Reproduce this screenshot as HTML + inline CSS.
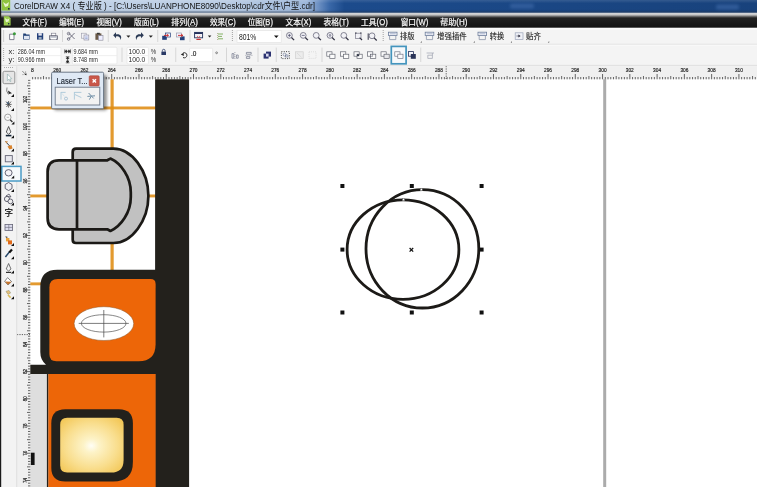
<!DOCTYPE html>
<html lang="zh"><head><meta charset="utf-8"><title>CorelDRAW X4</title>
<style>html,body{margin:0;padding:0;background:#fff;overflow:hidden}svg{display:block;filter:blur(0.35px)}text{font-family:"Liberation Sans","Noto Sans CJK SC",sans-serif;stroke-linejoin:round}</style>
</head><body>
<svg width="757" height="487" viewBox="0 0 757 487">
<defs>
<linearGradient id="tb" x1="0" y1="0" x2="1" y2="0">
<stop offset="0" stop-color="#c6d6e9"/><stop offset="0.30" stop-color="#b9cce4"/><stop offset="0.405" stop-color="#9db7da"/><stop offset="0.42" stop-color="#6f92c4"/><stop offset="0.435" stop-color="#3a68a8"/><stop offset="0.455" stop-color="#1c4b8c"/><stop offset="1" stop-color="#18427c"/>
</linearGradient>
<linearGradient id="tbv" x1="0" y1="0" x2="0" y2="1">
<stop offset="0" stop-color="#fff" stop-opacity="0.12"/><stop offset="0.25" stop-color="#fff" stop-opacity="0"/><stop offset="0.7" stop-color="#000" stop-opacity="0"/><stop offset="1" stop-color="#000" stop-opacity="0.14"/>
</linearGradient>
<linearGradient id="mb" x1="0" y1="0" x2="0" y2="1">
<stop offset="0" stop-color="#b4bcc8"/><stop offset="0.07" stop-color="#dadada"/><stop offset="0.15" stop-color="#bebebe"/><stop offset="0.25" stop-color="#686868"/><stop offset="0.35" stop-color="#222"/><stop offset="1" stop-color="#151515"/>
</linearGradient>
<radialGradient id="yel" cx="0.49" cy="0.51" r="0.68">
<stop offset="0" stop-color="#fffef6"/><stop offset="0.18" stop-color="#fdf3c8"/><stop offset="0.6" stop-color="#f9de8e"/><stop offset="1" stop-color="#f2c552"/>
</radialGradient>
<clipPath id="cv"><rect x="30" y="79" width="727" height="408"/></clipPath>
</defs>
<rect width="757" height="487" fill="#fff"/>
<g clip-path="url(#cv)">
<rect x="30" y="106.5" width="126" height="2.9" fill="#df8c12" opacity="0.88"/>
<rect x="30" y="194.5" width="126" height="2.9" fill="#df8c12" opacity="0.88"/>
<rect x="30" y="282.4" width="126" height="2.9" fill="#df8c12" opacity="0.88"/>
<rect x="110.5" y="79" width="3.2" height="200" fill="#df8c12" opacity="0.88"/>
<rect x="155.1" y="79" width="34" height="408" fill="#23211c"/>
<path d="M76 148.6 H113.5 C131.8 148.6 148.4 171 148.4 195.8 C148.4 220.6 131.8 243 113.5 243 H76 Q72.7 243 72.7 239.7 V151.9 Q72.7 148.6 76 148.6 Z" fill="#c1c1c1" stroke="#1b1916" stroke-width="2.7"/>
<path d="M59 160.3 H107.3 L110.4 158.6 C121 163.4 130.8 177 130.8 192.5 V197 C130.8 212.6 121 226.2 110.4 231 L107.3 229.3 H59 Q47.6 229.3 47.6 218 V171.6 Q47.6 160.3 59 160.3 Z" fill="#c1c1c1" stroke="#1b1916" stroke-width="2.7" stroke-linejoin="round"/>
<path d="M77 160.3 V229.3" stroke="#1b1916" stroke-width="2.7"/>
<path d="M57.3 269.7 H160 V374 H30 V364.7 H46 Q40.3 360 40.3 352 V286.7 Q40.3 269.7 57.3 269.7 Z" fill="#23211c"/>
<path d="M57.8 279 H150.6 Q155.6 279 155.6 284 V344 Q155.6 361.3 138.6 361.3 H56.4 Q49.4 361.3 49.4 354.3 V287.4 Q49.4 279 57.8 279 Z" fill="#ed6608"/>
<rect x="30" y="374" width="17.4" height="113" fill="#dedede"/>
<rect x="46.9" y="374" width="1.6" height="113" fill="#23211c"/>
<rect x="48.4" y="374" width="107.2" height="113" fill="#ed6608"/>
<rect x="30.8" y="452.7" width="3.8" height="12.3" fill="#111"/>
<ellipse cx="103.9" cy="323.6" rx="29.8" ry="16.9" fill="#fff" stroke="#8a5a30" stroke-width="0.5"/>
<ellipse cx="103.7" cy="323.4" rx="22.3" ry="8.7" fill="none" stroke="#555" stroke-width="0.7"/>
<path d="M78.7 323.4 H128.8 M103.8 310 V337.4" stroke="#444" stroke-width="0.7"/>
<path d="M65.3 409.2 H118.9 Q132.9 409.2 132.9 423.2 V462 Q132.9 481.6 113 481.6 H65.3 Q51.3 481.6 51.3 467.6 V423.2 Q51.3 409.2 65.3 409.2 Z" fill="#23211c"/>
<path d="M67.2 417.8 H116.6 Q123.6 417.8 123.6 424.8 V460 Q123.6 472.6 111 472.6 H67.2 Q60.2 472.6 60.2 465.6 V424.8 Q60.2 417.8 67.2 417.8 Z" fill="url(#yel)"/>
<rect x="603.2" y="79" width="3" height="408" fill="#ababab"/>
<ellipse cx="403" cy="249.55" rx="55.9" ry="49.75" fill="none" stroke="#1c1a17" stroke-width="2.8"/>
<ellipse cx="422.4" cy="248.85" rx="56.4" ry="59.15" fill="none" stroke="#1c1a17" stroke-width="2.8"/>
<rect x="340.4" y="184.0" width="4" height="4" fill="#111"/>
<rect x="340.4" y="247.6" width="4" height="4" fill="#111"/>
<rect x="340.4" y="310.5" width="4" height="4" fill="#111"/>
<rect x="409.8" y="184.0" width="4" height="4" fill="#111"/>
<path d="M409.6 248 l3.6 3.6 m0 -3.6 l-3.6 3.6" stroke="#111" stroke-width="1.25"/>
<rect x="409.8" y="310.5" width="4" height="4" fill="#111"/>
<rect x="479.6" y="184.0" width="4" height="4" fill="#111"/>
<rect x="479.6" y="247.6" width="4" height="4" fill="#111"/>
<rect x="479.6" y="310.5" width="4" height="4" fill="#111"/>
<rect x="402.5" y="198.4" width="2" height="2.4" fill="#fff" stroke="#555" stroke-width="0.4"/>
<rect x="420.3" y="188.4" width="2" height="2.4" fill="#fff" stroke="#555" stroke-width="0.4"/>
</g>
<rect x="17" y="66" width="740" height="13.3" fill="#f0f0f0"/>
<rect x="17" y="66" width="13.3" height="421" fill="#f0f0f0"/>
<path d="M32.62 77V79.3M35.34 77V79.3M38.07 77V79.3M40.80 77V79.3M43.53 76V79.3M46.25 77V79.3M48.98 77V79.3M51.71 77V79.3M54.43 77V79.3M57.16 74V79.3M59.89 77V79.3M62.61 77V79.3M65.34 77V79.3M68.07 77V79.3M70.80 76V79.3M73.52 77V79.3M76.25 77V79.3M78.98 77V79.3M81.70 77V79.3M84.43 74V79.3M87.16 77V79.3M89.88 77V79.3M92.61 77V79.3M95.34 77V79.3M98.06 76V79.3M100.79 77V79.3M103.52 77V79.3M106.25 77V79.3M108.97 77V79.3M111.70 74V79.3M114.43 77V79.3M117.15 77V79.3M119.88 77V79.3M122.61 77V79.3M125.34 76V79.3M128.06 77V79.3M130.79 77V79.3M133.52 77V79.3M136.24 77V79.3M138.97 74V79.3M141.70 77V79.3M144.42 77V79.3M147.15 77V79.3M149.88 77V79.3M152.61 76V79.3M155.33 77V79.3M158.06 77V79.3M160.79 77V79.3M163.51 77V79.3M166.24 74V79.3M168.97 77V79.3M171.69 77V79.3M174.42 77V79.3M177.15 77V79.3M179.88 76V79.3M182.60 77V79.3M185.33 77V79.3M188.06 77V79.3M190.78 77V79.3M193.51 74V79.3M196.24 77V79.3M198.96 77V79.3M201.69 77V79.3M204.42 77V79.3M207.14 76V79.3M209.87 77V79.3M212.60 77V79.3M215.33 77V79.3M218.05 77V79.3M220.78 74V79.3M223.51 77V79.3M226.23 77V79.3M228.96 77V79.3M231.69 77V79.3M234.42 76V79.3M237.14 77V79.3M239.87 77V79.3M242.60 77V79.3M245.32 77V79.3M248.05 74V79.3M250.78 77V79.3M253.50 77V79.3M256.23 77V79.3M258.96 77V79.3M261.69 76V79.3M264.41 77V79.3M267.14 77V79.3M269.87 77V79.3M272.59 77V79.3M275.32 74V79.3M278.05 77V79.3M280.77 77V79.3M283.50 77V79.3M286.23 77V79.3M288.95 76V79.3M291.68 77V79.3M294.41 77V79.3M297.14 77V79.3M299.86 77V79.3M302.59 74V79.3M305.32 77V79.3M308.04 77V79.3M310.77 77V79.3M313.50 77V79.3M316.23 76V79.3M318.95 77V79.3M321.68 77V79.3M324.41 77V79.3M327.13 77V79.3M329.86 74V79.3M332.59 77V79.3M335.31 77V79.3M338.04 77V79.3M340.77 77V79.3M343.50 76V79.3M346.22 77V79.3M348.95 77V79.3M351.68 77V79.3M354.40 77V79.3M357.13 74V79.3M359.86 77V79.3M362.58 77V79.3M365.31 77V79.3M368.04 77V79.3M370.76 76V79.3M373.49 77V79.3M376.22 77V79.3M378.95 77V79.3M381.67 77V79.3M384.40 74V79.3M387.13 77V79.3M389.85 77V79.3M392.58 77V79.3M395.31 77V79.3M398.03 76V79.3M400.76 77V79.3M403.49 77V79.3M406.22 77V79.3M408.94 77V79.3M411.67 74V79.3M414.40 77V79.3M417.12 77V79.3M419.85 77V79.3M422.58 77V79.3M425.31 76V79.3M428.03 77V79.3M430.76 77V79.3M433.49 77V79.3M436.21 77V79.3M438.94 74V79.3M441.67 77V79.3M444.39 77V79.3M447.12 77V79.3M449.85 77V79.3M452.57 76V79.3M455.30 77V79.3M458.03 77V79.3M460.76 77V79.3M463.48 77V79.3M466.21 74V79.3M468.94 77V79.3M471.66 77V79.3M474.39 77V79.3M477.12 77V79.3M479.84 76V79.3M482.57 77V79.3M485.30 77V79.3M488.03 77V79.3M490.75 77V79.3M493.48 74V79.3M496.21 77V79.3M498.93 77V79.3M501.66 77V79.3M504.39 77V79.3M507.12 76V79.3M509.84 77V79.3M512.57 77V79.3M515.30 77V79.3M518.02 77V79.3M520.75 74V79.3M523.48 77V79.3M526.20 77V79.3M528.93 77V79.3M531.66 77V79.3M534.38 76V79.3M537.11 77V79.3M539.84 77V79.3M542.57 77V79.3M545.29 77V79.3M548.02 74V79.3M550.75 77V79.3M553.47 77V79.3M556.20 77V79.3M558.93 77V79.3M561.65 76V79.3M564.38 77V79.3M567.11 77V79.3M569.84 77V79.3M572.56 77V79.3M575.29 74V79.3M578.02 77V79.3M580.74 77V79.3M583.47 77V79.3M586.20 77V79.3M588.92 76V79.3M591.65 77V79.3M594.38 77V79.3M597.11 77V79.3M599.83 77V79.3M602.56 74V79.3M605.29 77V79.3M608.01 77V79.3M610.74 77V79.3M613.47 77V79.3M616.20 76V79.3M618.92 77V79.3M621.65 77V79.3M624.38 77V79.3M627.10 77V79.3M629.83 74V79.3M632.56 77V79.3M635.28 77V79.3M638.01 77V79.3M640.74 77V79.3M643.47 76V79.3M646.19 77V79.3M648.92 77V79.3M651.65 77V79.3M654.37 77V79.3M657.10 74V79.3M659.83 77V79.3M662.55 77V79.3M665.28 77V79.3M668.01 77V79.3M670.74 76V79.3M673.46 77V79.3M676.19 77V79.3M678.92 77V79.3M681.64 77V79.3M684.37 74V79.3M687.10 77V79.3M689.82 77V79.3M692.55 77V79.3M695.28 77V79.3M698.00 76V79.3M700.73 77V79.3M703.46 77V79.3M706.19 77V79.3M708.91 77V79.3M711.64 74V79.3M714.37 77V79.3M717.09 77V79.3M719.82 77V79.3M722.55 77V79.3M725.28 76V79.3M728.00 77V79.3M730.73 77V79.3M733.46 77V79.3M736.18 77V79.3M738.91 74V79.3M741.64 77V79.3M744.36 77V79.3M747.09 77V79.3M749.82 77V79.3M752.55 76V79.3M755.27 77V79.3" stroke="#2a2a2a" stroke-width="0.7" fill="none"/>
<text x="31" y="72" font-size="5.7" fill="#222" stroke="#222" stroke-width="0.18" textLength="2.8" lengthAdjust="spacingAndGlyphs">8</text>
<text x="53.2" y="72" font-size="5.7" fill="#222" stroke="#222" stroke-width="0.18" textLength="8" lengthAdjust="spacingAndGlyphs">260</text>
<text x="80.4" y="72" font-size="5.7" fill="#222" stroke="#222" stroke-width="0.18" textLength="8" lengthAdjust="spacingAndGlyphs">262</text>
<text x="107.7" y="72" font-size="5.7" fill="#222" stroke="#222" stroke-width="0.18" textLength="8" lengthAdjust="spacingAndGlyphs">264</text>
<text x="135.0" y="72" font-size="5.7" fill="#222" stroke="#222" stroke-width="0.18" textLength="8" lengthAdjust="spacingAndGlyphs">266</text>
<text x="162.2" y="72" font-size="5.7" fill="#222" stroke="#222" stroke-width="0.18" textLength="8" lengthAdjust="spacingAndGlyphs">268</text>
<text x="189.5" y="72" font-size="5.7" fill="#222" stroke="#222" stroke-width="0.18" textLength="8" lengthAdjust="spacingAndGlyphs">270</text>
<text x="216.8" y="72" font-size="5.7" fill="#222" stroke="#222" stroke-width="0.18" textLength="8" lengthAdjust="spacingAndGlyphs">272</text>
<text x="244.1" y="72" font-size="5.7" fill="#222" stroke="#222" stroke-width="0.18" textLength="8" lengthAdjust="spacingAndGlyphs">274</text>
<text x="271.3" y="72" font-size="5.7" fill="#222" stroke="#222" stroke-width="0.18" textLength="8" lengthAdjust="spacingAndGlyphs">276</text>
<text x="298.6" y="72" font-size="5.7" fill="#222" stroke="#222" stroke-width="0.18" textLength="8" lengthAdjust="spacingAndGlyphs">278</text>
<text x="325.9" y="72" font-size="5.7" fill="#222" stroke="#222" stroke-width="0.18" textLength="8" lengthAdjust="spacingAndGlyphs">280</text>
<text x="353.1" y="72" font-size="5.7" fill="#222" stroke="#222" stroke-width="0.18" textLength="8" lengthAdjust="spacingAndGlyphs">282</text>
<text x="380.4" y="72" font-size="5.7" fill="#222" stroke="#222" stroke-width="0.18" textLength="8" lengthAdjust="spacingAndGlyphs">284</text>
<text x="407.7" y="72" font-size="5.7" fill="#222" stroke="#222" stroke-width="0.18" textLength="8" lengthAdjust="spacingAndGlyphs">286</text>
<text x="434.9" y="72" font-size="5.7" fill="#222" stroke="#222" stroke-width="0.18" textLength="8" lengthAdjust="spacingAndGlyphs">288</text>
<text x="462.2" y="72" font-size="5.7" fill="#222" stroke="#222" stroke-width="0.18" textLength="8" lengthAdjust="spacingAndGlyphs">290</text>
<text x="489.5" y="72" font-size="5.7" fill="#222" stroke="#222" stroke-width="0.18" textLength="8" lengthAdjust="spacingAndGlyphs">292</text>
<text x="516.8" y="72" font-size="5.7" fill="#222" stroke="#222" stroke-width="0.18" textLength="8" lengthAdjust="spacingAndGlyphs">294</text>
<text x="544.0" y="72" font-size="5.7" fill="#222" stroke="#222" stroke-width="0.18" textLength="8" lengthAdjust="spacingAndGlyphs">296</text>
<text x="571.3" y="72" font-size="5.7" fill="#222" stroke="#222" stroke-width="0.18" textLength="8" lengthAdjust="spacingAndGlyphs">298</text>
<text x="598.6" y="72" font-size="5.7" fill="#222" stroke="#222" stroke-width="0.18" textLength="8" lengthAdjust="spacingAndGlyphs">300</text>
<text x="625.8" y="72" font-size="5.7" fill="#222" stroke="#222" stroke-width="0.18" textLength="8" lengthAdjust="spacingAndGlyphs">302</text>
<text x="653.1" y="72" font-size="5.7" fill="#222" stroke="#222" stroke-width="0.18" textLength="8" lengthAdjust="spacingAndGlyphs">304</text>
<text x="680.4" y="72" font-size="5.7" fill="#222" stroke="#222" stroke-width="0.18" textLength="8" lengthAdjust="spacingAndGlyphs">306</text>
<text x="707.6" y="72" font-size="5.7" fill="#222" stroke="#222" stroke-width="0.18" textLength="8" lengthAdjust="spacingAndGlyphs">308</text>
<text x="734.9" y="72" font-size="5.7" fill="#222" stroke="#222" stroke-width="0.18" textLength="8" lengthAdjust="spacingAndGlyphs">310</text>
<path d="M28 80.35H30.3M28 83.07H30.3M27 85.79H30.3M28 88.51H30.3M28 91.23H30.3M28 93.96H30.3M28 96.68H30.3M25.2 99.40H30.3M28 102.12H30.3M28 104.84H30.3M28 107.57H30.3M28 110.29H30.3M27 113.01H30.3M28 115.73H30.3M28 118.45H30.3M28 121.18H30.3M28 123.90H30.3M25.2 126.62H30.3M28 129.34H30.3M28 132.06H30.3M28 134.79H30.3M28 137.51H30.3M27 140.23H30.3M28 142.95H30.3M28 145.67H30.3M28 148.40H30.3M28 151.12H30.3M25.2 153.84H30.3M28 156.56H30.3M28 159.28H30.3M28 162.01H30.3M28 164.73H30.3M27 167.45H30.3M28 170.17H30.3M28 172.89H30.3M28 175.62H30.3M28 178.34H30.3M25.2 181.06H30.3M28 183.78H30.3M28 186.50H30.3M28 189.23H30.3M28 191.95H30.3M27 194.67H30.3M28 197.39H30.3M28 200.11H30.3M28 202.84H30.3M28 205.56H30.3M25.2 208.28H30.3M28 211.00H30.3M28 213.72H30.3M28 216.45H30.3M28 219.17H30.3M27 221.89H30.3M28 224.61H30.3M28 227.33H30.3M28 230.06H30.3M28 232.78H30.3M25.2 235.50H30.3M28 238.22H30.3M28 240.94H30.3M28 243.67H30.3M28 246.39H30.3M27 249.11H30.3M28 251.83H30.3M28 254.55H30.3M28 257.28H30.3M28 260.00H30.3M25.2 262.72H30.3M28 265.44H30.3M28 268.16H30.3M28 270.89H30.3M28 273.61H30.3M27 276.33H30.3M28 279.05H30.3M28 281.77H30.3M28 284.50H30.3M28 287.22H30.3M25.2 289.94H30.3M28 292.66H30.3M28 295.38H30.3M28 298.11H30.3M28 300.83H30.3M27 303.55H30.3M28 306.27H30.3M28 308.99H30.3M28 311.72H30.3M28 314.44H30.3M25.2 317.16H30.3M28 319.88H30.3M28 322.60H30.3M28 325.33H30.3M28 328.05H30.3M27 330.77H30.3M28 333.49H30.3M28 336.21H30.3M28 338.94H30.3M28 341.66H30.3M25.2 344.38H30.3M28 347.10H30.3M28 349.82H30.3M28 352.55H30.3M28 355.27H30.3M27 357.99H30.3M28 360.71H30.3M28 363.43H30.3M28 366.16H30.3M28 368.88H30.3M25.2 371.60H30.3M28 374.32H30.3M28 377.04H30.3M28 379.77H30.3M28 382.49H30.3M27 385.21H30.3M28 387.93H30.3M28 390.65H30.3M28 393.38H30.3M28 396.10H30.3M25.2 398.82H30.3M28 401.54H30.3M28 404.26H30.3M28 406.99H30.3M28 409.71H30.3M27 412.43H30.3M28 415.15H30.3M28 417.87H30.3M28 420.60H30.3M28 423.32H30.3M25.2 426.04H30.3M28 428.76H30.3M28 431.48H30.3M28 434.21H30.3M28 436.93H30.3M27 439.65H30.3M28 442.37H30.3M28 445.09H30.3M28 447.82H30.3M28 450.54H30.3M25.2 453.26H30.3M28 455.98H30.3M28 458.70H30.3M28 461.43H30.3M28 464.15H30.3M27 466.87H30.3M28 469.59H30.3M28 472.31H30.3M28 475.04H30.3M28 477.76H30.3M25.2 480.48H30.3M28 483.20H30.3M28 485.92H30.3" stroke="#2a2a2a" stroke-width="0.7" fill="none"/>
<text transform="translate(26.8 103.1) rotate(-90)" font-size="5.4" fill="#222" stroke="#222" stroke-width="0.18" textLength="7.4" lengthAdjust="spacingAndGlyphs">102</text>
<text transform="translate(26.8 130.3) rotate(-90)" font-size="5.4" fill="#222" stroke="#222" stroke-width="0.18" textLength="7.4" lengthAdjust="spacingAndGlyphs">100</text>
<text transform="translate(26.8 156.3) rotate(-90)" font-size="5.4" fill="#222" stroke="#222" stroke-width="0.18" textLength="5.0" lengthAdjust="spacingAndGlyphs">98</text>
<text transform="translate(26.8 183.6) rotate(-90)" font-size="5.4" fill="#222" stroke="#222" stroke-width="0.18" textLength="5.0" lengthAdjust="spacingAndGlyphs">96</text>
<text transform="translate(26.8 210.8) rotate(-90)" font-size="5.4" fill="#222" stroke="#222" stroke-width="0.18" textLength="5.0" lengthAdjust="spacingAndGlyphs">94</text>
<text transform="translate(26.8 238.0) rotate(-90)" font-size="5.4" fill="#222" stroke="#222" stroke-width="0.18" textLength="5.0" lengthAdjust="spacingAndGlyphs">92</text>
<text transform="translate(26.8 265.2) rotate(-90)" font-size="5.4" fill="#222" stroke="#222" stroke-width="0.18" textLength="5.0" lengthAdjust="spacingAndGlyphs">90</text>
<text transform="translate(26.8 292.4) rotate(-90)" font-size="5.4" fill="#222" stroke="#222" stroke-width="0.18" textLength="5.0" lengthAdjust="spacingAndGlyphs">88</text>
<text transform="translate(26.8 319.7) rotate(-90)" font-size="5.4" fill="#222" stroke="#222" stroke-width="0.18" textLength="5.0" lengthAdjust="spacingAndGlyphs">86</text>
<text transform="translate(26.8 346.9) rotate(-90)" font-size="5.4" fill="#222" stroke="#222" stroke-width="0.18" textLength="5.0" lengthAdjust="spacingAndGlyphs">84</text>
<text transform="translate(26.8 374.1) rotate(-90)" font-size="5.4" fill="#222" stroke="#222" stroke-width="0.18" textLength="5.0" lengthAdjust="spacingAndGlyphs">82</text>
<text transform="translate(26.8 401.3) rotate(-90)" font-size="5.4" fill="#222" stroke="#222" stroke-width="0.18" textLength="5.0" lengthAdjust="spacingAndGlyphs">80</text>
<text transform="translate(26.8 428.5) rotate(-90)" font-size="5.4" fill="#222" stroke="#222" stroke-width="0.18" textLength="5.0" lengthAdjust="spacingAndGlyphs">78</text>
<text transform="translate(26.8 455.8) rotate(-90)" font-size="5.4" fill="#222" stroke="#222" stroke-width="0.18" textLength="5.0" lengthAdjust="spacingAndGlyphs">76</text>
<text transform="translate(26.8 483.0) rotate(-90)" font-size="5.4" fill="#222" stroke="#222" stroke-width="0.18" textLength="5.0" lengthAdjust="spacingAndGlyphs">74</text>
<rect x="17" y="66" width="13.3" height="13.3" fill="#f0f0f0"/>
<path d="M22.3 71 L25.4 74.2" stroke="#444" stroke-width="0.9" stroke-dasharray="0.9 0.8"/><path d="M26.6 75.2 l-2.2 -0.4 l1.8 -1.8z" fill="#222"/><path d="M25.6 71.4v1.4M22.4 74.6h1.2" stroke="#666" stroke-width="0.6"/>
<path d="M446.2 66V79" stroke="#333" stroke-width="0.8" stroke-dasharray="1.2 1.2"/>
<path d="M17 334.6H30" stroke="#333" stroke-width="0.8" stroke-dasharray="1.2 1.2"/>
<rect x="0" y="66" width="17" height="421" fill="#f3f3f3"/>
<rect x="16.4" y="66" width="0.8" height="421" fill="#d9d9d9"/>
<path d="M4 67.5H14" stroke="#aaa" stroke-width="1" stroke-dasharray="1 1"/>
<rect x="3" y="71.3" width="11.8" height="12.4" rx="1.5" fill="#e6e6e6" stroke="#8a8a8a" stroke-width="0.9"/>
<path d="M7.4 74 L7.4 80.6 L9 79.2 L10.2 81.6 L11 81.2 L9.9 78.9 L11.8 78.7 Z" fill="#fff" stroke="#8aa" stroke-width="0.6"/>
<path d="M7 87.5 Q5.6 91 8.5 94.5" stroke="#777" stroke-width="0.9" fill="none"/><path d="M8 90.6 l4 2.6 l-3.2 0.8 z" fill="#222"/>
<path d="M11.0 97.0 l3 0 l0 -3 z" fill="#111"/>
<path d="M6 101.5 L11 107 M5.6 104.4 H11.6 M8.6 101 V107.6 M11 101.6 L6.4 107" stroke="#444" stroke-width="0.8" fill="none"/><path d="M6.4 102 l2.6 0.8 l-1 1.8z" fill="#357"/>
<path d="M11.0 111.0 l3 0 l0 -3 z" fill="#111"/>
<circle cx="7.8" cy="117.3" r="3.2" fill="#fafafa" stroke="#8a8a8a" stroke-width="0.8"/><path d="M6.6 117.3h2.4" stroke="#999" stroke-width="0.6"/><path d="M10.2 119.8 L12.4 122" stroke="#333" stroke-width="1.3"/>
<path d="M11.4 124.6 l3 0 l0 -3 z" fill="#111"/>
<path d="M8.6 126.5 L6.3 132 L8.6 134.4 L10.9 132 Z" fill="#eee" stroke="#333" stroke-width="0.8"/><path d="M5.8 135.6H11.4" stroke="#123" stroke-width="1.6"/>
<path d="M11.0 138.2 l3 0 l0 -3 z" fill="#111"/>
<path d="M5.5 141.5 L11.5 148" stroke="#444" stroke-width="1"/><path d="M5 141 l3 0.4 l-1.6 2.2z" fill="#c84"/><path d="M7.5 146.5 l4 -1.5 l1 3.4 l-3 1z" fill="#d9822b"/>
<path d="M11.0 151.4 l3 0 l0 -3 z" fill="#111"/>
<rect x="5.3" y="155.6" width="7" height="6.2" fill="#e8e8ee" stroke="#667" stroke-width="0.9"/>
<path d="M11.0 164.4 l3 0 l0 -3 z" fill="#111"/>
<rect x="1.8" y="166.4" width="19.2" height="14.6" fill="#f6fafc" stroke="#4a9bc6" stroke-width="1.5"/>
<ellipse cx="8.6" cy="172.8" rx="3.5" ry="3.2" fill="#f4f4f8" stroke="#556" stroke-width="0.9"/>
<path d="M11.2 178.4 l3 0 l0 -3 z" fill="#111"/>
<path d="M8.6 182.5 L12 184.5 L12 188.5 L8.6 190.5 L5.2 188.5 L5.2 184.5Z" fill="#f0f0f4" stroke="#556" stroke-width="0.9"/>
<path d="M11.0 192.0 l3 0 l0 -3 z" fill="#111"/>
<circle cx="7" cy="199" r="2.6" fill="#eee" stroke="#445" stroke-width="0.8"/><circle cx="10.4" cy="201.4" r="2.4" fill="#eee" stroke="#445" stroke-width="0.8"/><path d="M6 196 l3 -2 l2 3z" fill="#eee" stroke="#445" stroke-width="0.7"/>
<path d="M11.0 205.4 l3 0 l0 -3 z" fill="#111"/>
<text x="4.6" y="215.6" font-size="8.6" fill="#333" font-weight="bold">字</text>
<rect x="5" y="224.4" width="7.6" height="6" fill="#dde" stroke="#667" stroke-width="0.8"/><path d="M5 227.4H12.6M8.8 224.4V230.4" stroke="#667" stroke-width="0.6"/>
<path d="M5 236.6 l2.4 0 l0 2.4z" fill="#555"/><rect x="6" y="238" width="3.4" height="3.4" fill="#e9a23b"/><rect x="8" y="240.4" width="4" height="4" fill="#e06a1a"/>
<path d="M11.0 246.0 l3 0 l0 -3 z" fill="#111"/>
<path d="M5.4 257 L9.6 251.6" stroke="#246" stroke-width="1.5"/><path d="M9.3 252.4 L12 249.4" stroke="#111" stroke-width="2.2"/>
<path d="M11.0 259.2 l3 0 l0 -3 z" fill="#111"/>
<path d="M8.6 263.5 L6.2 269 L8.6 271 L11 269 Z" fill="#f2f2f2" stroke="#555" stroke-width="0.8"/><path d="M6 272.4H11.2" stroke="#333" stroke-width="1.2"/>
<path d="M11.0 273.4 l3 0 l0 -3 z" fill="#111"/>
<path d="M7.6 277.6 L11.6 281.6 L8 285 L4.6 281.4 Z" fill="#fff" stroke="#555" stroke-width="0.7"/><path d="M5 281.6 L8 284.8 L11.4 281.8 Z" fill="#c7742a"/>
<path d="M11.0 286.4 l3 0 l0 -3 z" fill="#111"/>
<path d="M6 291.4 l3 -1 l1.6 2.6 l-2.6 1.4z" fill="#e8c27a" stroke="#886" stroke-width="0.5"/><path d="M8 295 l2.6 2.6" stroke="#db5" stroke-width="1.6"/>
<path d="M11.0 299.2 l3 0 l0 -3 z" fill="#111"/>
<rect x="0" y="27.6" width="757" height="38.6" fill="#f4f4f4"/>
<rect x="0" y="27.6" width="757" height="2" fill="#fdfdfd"/>
<rect x="0" y="43.8" width="757" height="0.9" fill="#dcdcdc"/>
<rect x="0" y="44.7" width="757" height="0.8" fill="#fbfbfb"/>
<rect x="0" y="64.9" width="757" height="0.8" fill="#dadada"/>
<path d="M3.6 48V62" stroke="#aaa" stroke-width="1" stroke-dasharray="1 1"/>
<rect x="0" y="0" width="757" height="13" fill="url(#tb)"/>
<rect x="0" y="0" width="757" height="13" fill="url(#tbv)"/>
<rect x="0" y="11.6" width="757" height="1.1" fill="#2c4262" opacity="0.7"/>
<rect x="0" y="12.7" width="757" height="15" fill="url(#mb)"/>
<rect x="0" y="0" width="1.2" height="487" fill="#1a1a1a"/>
<rect x="510" y="3.4" width="24" height="5" fill="#456fae" opacity="0.55" rx="2" style="filter:blur(1.6px)"/>
<rect x="716" y="4.4" width="23" height="5" fill="#456fae" opacity="0.55" rx="2" style="filter:blur(1.6px)"/>
<rect x="1.6" y="0" width="8.6" height="10.6" fill="#8fc33f"/><path d="M3 2 l3 2 l3 -2 l-1 4 l-3 1z" fill="#e9f5cf"/><rect x="8" y="8" width="1.6" height="1.6" fill="#234"/>
<path d="M3.8 16.2 H8.6 L10.6 18.2 V25.6 H3.8Z" fill="#9acb4d"/><path d="M4.8 18 l2.4 1.6 l2 -1 l-0.6 3 l-2.6 0.6z" fill="#e9f5cf"/><rect x="8" y="23" width="1.4" height="1.4" fill="#234"/>
<text x="14" y="9.3" font-size="9.2" fill="#111" textLength="301" lengthAdjust="spacingAndGlyphs">CorelDRAW X4 ( 专业版 ) - [C:\Users\LUANPHONE8090\Desktop\cdr文件\户型.cdr]</text>
<text x="22.5" y="24.6" font-size="8.4" fill="#f8f8f8" stroke="#f8f8f8" stroke-width="0.22" textLength="24.4" lengthAdjust="spacingAndGlyphs">文件(F)</text>
<rect x="39.3" y="25.6" width="4" height="0.6" fill="#ddd"/>
<text x="59.2" y="24.6" font-size="8.4" fill="#f8f8f8" stroke="#f8f8f8" stroke-width="0.22" textLength="24.7" lengthAdjust="spacingAndGlyphs">编辑(E)</text>
<rect x="76.3" y="25.6" width="4" height="0.6" fill="#ddd"/>
<text x="96.4" y="24.6" font-size="8.4" fill="#f8f8f8" stroke="#f8f8f8" stroke-width="0.22" textLength="25.4" lengthAdjust="spacingAndGlyphs">视图(V)</text>
<rect x="114.2" y="25.6" width="4" height="0.6" fill="#ddd"/>
<text x="134.0" y="24.6" font-size="8.4" fill="#f8f8f8" stroke="#f8f8f8" stroke-width="0.22" textLength="24.8" lengthAdjust="spacingAndGlyphs">版面(L)</text>
<rect x="151.2" y="25.6" width="4" height="0.6" fill="#ddd"/>
<text x="171.3" y="24.6" font-size="8.4" fill="#f8f8f8" stroke="#f8f8f8" stroke-width="0.22" textLength="26.7" lengthAdjust="spacingAndGlyphs">排列(A)</text>
<rect x="190.4" y="25.6" width="4" height="0.6" fill="#ddd"/>
<text x="209.9" y="24.6" font-size="8.4" fill="#f8f8f8" stroke="#f8f8f8" stroke-width="0.22" textLength="25.8" lengthAdjust="spacingAndGlyphs">效果(C)</text>
<rect x="228.1" y="25.6" width="4" height="0.6" fill="#ddd"/>
<text x="247.8" y="24.6" font-size="8.4" fill="#f8f8f8" stroke="#f8f8f8" stroke-width="0.22" textLength="25.1" lengthAdjust="spacingAndGlyphs">位图(B)</text>
<rect x="265.3" y="25.6" width="4" height="0.6" fill="#ddd"/>
<text x="285.6" y="24.6" font-size="8.4" fill="#f8f8f8" stroke="#f8f8f8" stroke-width="0.22" textLength="25.6" lengthAdjust="spacingAndGlyphs">文本(X)</text>
<rect x="303.6" y="25.6" width="4" height="0.6" fill="#ddd"/>
<text x="323.5" y="24.6" font-size="8.4" fill="#f8f8f8" stroke="#f8f8f8" stroke-width="0.22" textLength="25.4" lengthAdjust="spacingAndGlyphs">表格(T)</text>
<rect x="341.3" y="25.6" width="4" height="0.6" fill="#ddd"/>
<text x="361.0" y="24.6" font-size="8.4" fill="#f8f8f8" stroke="#f8f8f8" stroke-width="0.22" textLength="26.8" lengthAdjust="spacingAndGlyphs">工具(O)</text>
<rect x="380.2" y="25.6" width="4" height="0.6" fill="#ddd"/>
<text x="400.7" y="24.6" font-size="8.4" fill="#f8f8f8" stroke="#f8f8f8" stroke-width="0.22" textLength="27.7" lengthAdjust="spacingAndGlyphs">窗口(W)</text>
<rect x="420.8" y="25.6" width="4" height="0.6" fill="#ddd"/>
<text x="440.3" y="24.6" font-size="8.4" fill="#f8f8f8" stroke="#f8f8f8" stroke-width="0.22" textLength="27.1" lengthAdjust="spacingAndGlyphs">帮助(H)</text>
<rect x="459.8" y="25.6" width="4" height="0.6" fill="#ddd"/>
<path d="M3.6 30.5V42" stroke="#aaa" stroke-width="1" stroke-dasharray="1 1"/>
<path d="M9.6 34.2 H14 V39.6 H9.6Z" fill="#fff" stroke="#667" stroke-width="0.8"/><circle cx="14.4" cy="33.8" r="1.5" fill="#3a9a3a"/>
<path d="M23.2 33.4 h2.4 l0.8 1 h3.2 v5 h-6.4z" fill="#1f3f73"/><rect x="24" y="35.8" width="5.2" height="3.2" fill="#dfe6f2"/>
<rect x="37" y="33.2" width="6.2" height="6.4" fill="#24407a"/><rect x="38.4" y="33.2" width="3.4" height="2.4" fill="#e8e8f0"/><rect x="38.6" y="37" width="3" height="2.6" fill="#9ab"/>
<rect x="51.4" y="33.2" width="4.4" height="2.6" fill="#fff" stroke="#778" stroke-width="0.6"/><rect x="49.6" y="35.8" width="8" height="3.6" fill="#c9cdd6" stroke="#556" stroke-width="0.7"/><rect x="51" y="38" width="5" height="1.4" fill="#fff"/>
<rect x="62.2" y="30.0" width="0.8" height="12.0" fill="#cfcfcf"/>
<path d="M68.6 33 L74.6 39 M74.6 33 L68.6 39" stroke="#667" stroke-width="0.9"/><circle cx="68.6" cy="39" r="1.3" fill="none" stroke="#667" stroke-width="0.8"/><circle cx="68.6" cy="33.6" r="1.3" fill="none" stroke="#667" stroke-width="0.8"/>
<rect x="81.6" y="33.2" width="4.6" height="5" fill="#f4f4f8" stroke="#99a" stroke-width="0.6"/><rect x="84" y="35" width="4.8" height="5" fill="#eef" stroke="#889" stroke-width="0.6"/><path d="M85.2 37h2.4M85.2 38.4h2.4" stroke="#57a" stroke-width="0.5"/>
<rect x="95.4" y="33.4" width="6" height="6.4" fill="#6b5a48"/><rect x="97" y="32.8" width="2.8" height="1.4" fill="#333"/><rect x="98.4" y="35.6" width="4.6" height="4.6" fill="#eef" stroke="#889" stroke-width="0.6"/>
<rect x="107.8" y="30.0" width="0.8" height="12.0" fill="#cfcfcf"/>
<path d="M120.4 40 C122.6 36 120 33.6 116 34.4 V32.2 L113.2 35.2 L116 38.2 V36.4 C118.6 35.8 120.4 37 120.4 40Z" fill="#2b3a55"/>
<path d="M126.4 35.6h4l-2 2.2z" fill="#222"/>
<path d="M136.6 40 C134.4 36 137 33.6 141 34.4 V32.2 L143.8 35.2 L141 38.2 V36.4 C138.4 35.8 136.6 37 136.6 40Z" fill="#2b3a55"/>
<path d="M148.8 35.6h4l-2 2.2z" fill="#222"/>
<rect x="157.4" y="30.0" width="0.8" height="12.0" fill="#cfcfcf"/>
<rect x="162.2" y="35.8" width="4.6" height="4" fill="#24407a"/><rect x="165.4" y="33" width="5" height="4" fill="#f4f4ff" stroke="#24407a" stroke-width="0.7"/><path d="M164 35.4h4.4M168.4 35.4l-1.6-1.2M168.4 35.4l-1.6 1.2" stroke="#c22" stroke-width="0.9" fill="none"/>
<rect x="180" y="36.4" width="4.6" height="3.8" fill="#24407a"/><rect x="176.4" y="33" width="5" height="4" fill="#f4f4ff" stroke="#99a" stroke-width="0.7"/><path d="M178 35.4h4.8M182.8 35.4l-1.6-1.2M182.8 35.4l-1.6 1.2" stroke="#c22" stroke-width="0.9" fill="none"/>
<rect x="189.6" y="30.0" width="0.8" height="12.0" fill="#cfcfcf"/>
<rect x="194.6" y="32.4" width="8" height="5.4" fill="#f4f4f8" stroke="#24305a" stroke-width="0.9"/><rect x="194.6" y="32.4" width="8" height="1.6" fill="#24305a"/><path d="M196.4 39.4h4.4" stroke="#c33" stroke-width="1.2"/><path d="M197 36 l1.6 1.4 l1.6-1.4" stroke="#d44" stroke-width="0.8" fill="none"/>
<path d="M207.8 35.6h3.6l-1.8 2z" fill="#222"/>
<path d="M218 34h5M218 36.4h4M218 38.8h5" stroke="#7a5" stroke-width="0.9"/><path d="M217.6 33v7" stroke="#996" stroke-width="0.7" stroke-dasharray="1 1"/>
<path d="M232.4 30.0V42.0" stroke="#999" stroke-width="0.9" stroke-dasharray="1 1"/>
<rect x="237" y="30.6" width="44.2" height="11.8" fill="#fff" stroke="#e2e2e2" stroke-width="0.6"/>
<text x="239" y="39.6" font-size="8.6" fill="#222" textLength="17.4" lengthAdjust="spacingAndGlyphs">801%</text>
<path d="M274 35.6h4.6l-2.3 2.5z" fill="#111"/>
<circle cx="289.4" cy="35.4" r="2.9" fill="#f2f2f6" stroke="#778" stroke-width="0.9"/><path d="M291.5 37.5 l2.6 2.6" stroke="#334" stroke-width="1.3"/>
<path d="M287.9 35.4h3M289.4 33.9v3" stroke="#446" stroke-width="0.7"/>
<circle cx="303.2" cy="35.4" r="2.9" fill="#f2f2f6" stroke="#778" stroke-width="0.9"/><path d="M305.3 37.5 l2.6 2.6" stroke="#334" stroke-width="1.3"/>
<path d="M301.7 35.4h3" stroke="#446" stroke-width="0.7"/>
<circle cx="316.2" cy="35.4" r="2.9" fill="#f2f2f6" stroke="#778" stroke-width="0.9"/><path d="M318.3 37.5 l2.6 2.6" stroke="#334" stroke-width="1.3"/>
<circle cx="330.0" cy="35.4" r="2.9" fill="#f2f2f6" stroke="#778" stroke-width="0.9"/><path d="M332.1 37.5 l2.6 2.6" stroke="#334" stroke-width="1.3"/>
<circle cx="330.0" cy="35.4" r="1.3" fill="#99a"/>
<circle cx="343.8" cy="35.4" r="2.9" fill="#f2f2f6" stroke="#778" stroke-width="0.9"/><path d="M345.9 37.5 l2.6 2.6" stroke="#334" stroke-width="1.3"/>
<rect x="355.6" y="33.2" width="5.4" height="5.4" fill="#f2f2f6" stroke="#778" stroke-width="0.7"/><path d="M359.6 37.6l2.4 2.4" stroke="#334" stroke-width="1.2"/><path d="M355 33h1.6M360 33h1.6" stroke="#334" stroke-width="0.9"/>
<path d="M368.2 33.4v6.4" stroke="#334" stroke-width="1"/>
<circle cx="372.0" cy="35.8" r="2.9" fill="#f2f2f6" stroke="#778" stroke-width="0.9"/><path d="M374.1 37.9 l2.6 2.6" stroke="#334" stroke-width="1.3"/>
<path d="M383.2 30.0V42.0" stroke="#999" stroke-width="0.9" stroke-dasharray="1 1"/>
<rect x="388.4" y="32.2" width="8.6" height="3.2" fill="#f8f8fb" stroke="#6a7a9a" stroke-width="0.8"/><path d="M389.8 33.8h6" stroke="#93a2c2" stroke-width="0.8"/><path d="M389.6 35.6v4h6.2v-4" stroke="#8a94a8" stroke-width="0.8" fill="none"/>
<text x="400" y="39.4" font-size="8.2" fill="#1c1c1c" stroke="#1c1c1c" stroke-width="0.12" textLength="14.6" lengthAdjust="spacingAndGlyphs">排版</text>
<path d="M420.4 42.6l1.4 0l0-1.4z" fill="#333"/>
<rect x="425.2" y="32.2" width="8.6" height="3.2" fill="#f8f8fb" stroke="#6a7a9a" stroke-width="0.8"/><path d="M426.6 33.8h6" stroke="#93a2c2" stroke-width="0.8"/><path d="M426.4 35.6v4h6.2v-4" stroke="#8a94a8" stroke-width="0.8" fill="none"/>
<text x="437" y="39.4" font-size="8.2" fill="#1c1c1c" stroke="#1c1c1c" stroke-width="0.12" textLength="29.8" lengthAdjust="spacingAndGlyphs">增强插件</text>
<path d="M473.4 42.6l1.4 0l0-1.4z" fill="#333"/>
<rect x="478.0" y="32.2" width="8.6" height="3.2" fill="#f8f8fb" stroke="#6a7a9a" stroke-width="0.8"/><path d="M479.4 33.8h6" stroke="#93a2c2" stroke-width="0.8"/><path d="M479.2 35.6v4h6.2v-4" stroke="#8a94a8" stroke-width="0.8" fill="none"/>
<text x="489.8" y="39.4" font-size="8.2" fill="#1c1c1c" stroke="#1c1c1c" stroke-width="0.12" textLength="14.4" lengthAdjust="spacingAndGlyphs">转换</text>
<path d="M510.6 42.6l1.4 0l0-1.4z" fill="#333"/>
<rect x="515.2" y="32.8" width="7.8" height="6.6" fill="#eef0f6" stroke="#9aa3b8" stroke-width="0.7"/><path d="M516.4 36h2.2" stroke="#556" stroke-width="0.7"/><path d="M518.4 34.6l2.2 1.4l-2.2 1.4z" fill="#223"/>
<text x="526" y="39.4" font-size="8.2" fill="#1c1c1c" stroke="#1c1c1c" stroke-width="0.12" textLength="15" lengthAdjust="spacingAndGlyphs">贴齐</text>
<path d="M547.8 42.6l1.4 0l0-1.4z" fill="#333"/>
<rect x="16.6" y="47.3" width="44.4" height="16.7" rx="1" fill="#fff" stroke="#e4e4e4" stroke-width="0.7"/>
<rect x="72.4" y="47.3" width="44.6" height="16.7" rx="1" fill="#fff" stroke="#e4e4e4" stroke-width="0.7"/>
<rect x="127.0" y="47.3" width="21.4" height="16.7" rx="1" fill="#fff" stroke="#e4e4e4" stroke-width="0.7"/>
<rect x="189.6" y="48.2" width="23.0" height="13.4" rx="1" fill="#fff" stroke="#e4e4e4" stroke-width="0.7"/>
<rect x="16.6" y="55.3" width="44.4" height="0.8" fill="#ececec"/><rect x="72.4" y="55.3" width="44.6" height="0.8" fill="#ececec"/><rect x="127" y="55.3" width="21.4" height="0.8" fill="#ececec"/>
<text x="8.6" y="53.9" font-size="7.4" fill="#2a2a2a" textLength="6" lengthAdjust="spacingAndGlyphs">x:</text>
<text x="8.6" y="62.2" font-size="7.4" fill="#2a2a2a" textLength="6" lengthAdjust="spacingAndGlyphs">y:</text>
<text x="17.8" y="53.7" font-size="7" fill="#2a2a2a" textLength="27.2" lengthAdjust="spacingAndGlyphs">286.04 mm</text>
<text x="17.8" y="61.9" font-size="7" fill="#2a2a2a" textLength="27.2" lengthAdjust="spacingAndGlyphs">90.966 mm</text>
<path d="M64.8 51.4h5.6M64.8 49.4v4M70.4 49.4v4M65 51.4l1.6-1.4v2.8zM70.2 51.4l-1.6-1.4v2.8z" stroke="#222" stroke-width="0.7" fill="#222"/>
<path d="M67.6 57v5.6M65.8 56.8h3.6M65.8 62.8h3.6M67.6 57l-1.3 1.6h2.6zM67.6 62.6l-1.3-1.6h2.6z" stroke="#222" stroke-width="0.7" fill="#222"/>
<text x="73.4" y="53.7" font-size="7" fill="#2a2a2a" textLength="24.4" lengthAdjust="spacingAndGlyphs">9.684 mm</text>
<text x="73.4" y="61.9" font-size="7" fill="#2a2a2a" textLength="24.4" lengthAdjust="spacingAndGlyphs">8.748 mm</text>
<rect x="121.6" y="47.6" width="0.8" height="14.4" fill="#cfcfcf"/>
<text x="128.4" y="53.7" font-size="7" fill="#2a2a2a" textLength="17" lengthAdjust="spacingAndGlyphs">100.0</text>
<text x="128.4" y="61.9" font-size="7" fill="#2a2a2a" textLength="17" lengthAdjust="spacingAndGlyphs">100.0</text>
<text x="150.8" y="53.9" font-size="7.4" fill="#333" textLength="5.4" lengthAdjust="spacingAndGlyphs">%</text>
<text x="150.8" y="62.2" font-size="7.4" fill="#333" textLength="5.4" lengthAdjust="spacingAndGlyphs">%</text>
<rect x="161.4" y="51.6" width="4.6" height="3.4" fill="#2a3a66"/><path d="M162.4 51.6v-1a1.3 1.3 0 0 1 2.6 0v1" stroke="#2a3a66" stroke-width="0.8" fill="none"/>
<rect x="175.4" y="47.6" width="0.8" height="14.4" fill="#cfcfcf"/>
<path d="M183.2 52.9a2.6 2.6 0 1 1 -0.2 4.6" stroke="#333" stroke-width="1" fill="none"/><path d="M180.8 54.6l2.8-1.8l0.2 3.2z" fill="#222"/>
<text x="191" y="56.1" font-size="7.6" fill="#2a2a2a" stroke="#2a2a2a" stroke-width="0.2" textLength="5.4" lengthAdjust="spacingAndGlyphs">.0</text>
<circle cx="216.6" cy="52.8" r="0.9" fill="none" stroke="#444" stroke-width="0.6"/>
<rect x="226.2" y="47.6" width="0.8" height="14.4" fill="#cfcfcf"/>
<path d="M232 53.6v4.6h1.8v-4.6zM236.4 55v3.2h1.8V55z" fill="none" stroke="#6e7488" stroke-width="0.7"/><path d="M234.9 52v7" stroke="#6e7488" stroke-width="0.6" stroke-dasharray="1 1"/>
<path d="M246.4 52.4h4.8v1.8h-4.8zM246.4 56.6h3.4v1.8h-3.4z" fill="none" stroke="#6e7488" stroke-width="0.7"/><path d="M245.4 55.4h7" stroke="#6e7488" stroke-width="0.6" stroke-dasharray="1 1"/>
<rect x="257.6" y="47.6" width="0.8" height="14.4" fill="#cfcfcf"/>
<rect x="263.6" y="53.6" width="5" height="5" fill="#2b3270"/><rect x="266" y="51.6" width="5" height="5" fill="#2b3270"/><rect x="266" y="53.6" width="2.6" height="3" fill="#d8daf0"/>
<rect x="275.8" y="47.6" width="0.8" height="14.4" fill="#cfcfcf"/>
<rect x="281.4" y="51.6" width="8" height="7" fill="none" stroke="#333" stroke-width="0.9" stroke-dasharray="1 1.33"/><circle cx="284.6" cy="54.6" r="1.5" fill="none" stroke="#6a7390" stroke-width="0.6"/><rect x="285.4" y="55" width="2.6" height="2" fill="none" stroke="#6a7390" stroke-width="0.6"/>
<rect x="295.6" y="51.8" width="7.6" height="6.6" fill="#ececec" stroke="#cfcfcf" stroke-width="0.7"/><path d="M297 53l4.6 4.4" stroke="#d4d4d4" stroke-width="0.7"/>
<rect x="309" y="51.8" width="7" height="6.6" fill="none" stroke="#d4d4d4" stroke-width="0.7" stroke-dasharray="1 1"/>
<rect x="321.6" y="47.6" width="0.8" height="14.4" fill="#cfcfcf"/>
<rect x="326.8" y="51.8" width="5.2" height="4.4" fill="#fcfcfc" stroke="#5a5d68" stroke-width="0.65"/><rect x="329.8" y="54.2" width="5.2" height="4.4" fill="#fcfcfc" stroke="#5a5d68" stroke-width="0.65"/>
<rect x="340.6" y="51.8" width="5.2" height="4.4" fill="#fcfcfc" stroke="#5a5d68" stroke-width="0.65"/><rect x="343.6" y="54.2" width="5.2" height="4.4" fill="#fcfcfc" stroke="#5a5d68" stroke-width="0.65"/>
<rect x="354.0" y="51.8" width="5.2" height="4.4" fill="#fcfcfc" stroke="#5a5d68" stroke-width="0.65"/><rect x="357.0" y="54.2" width="5.2" height="4.4" fill="#fcfcfc" stroke="#5a5d68" stroke-width="0.65"/>
<rect x="357" y="54.2" width="2.2" height="2" fill="#333848"/>
<rect x="367.6" y="51.8" width="5.2" height="4.4" fill="#fcfcfc" stroke="#5a5d68" stroke-width="0.65"/><rect x="370.6" y="54.2" width="5.2" height="4.4" fill="#fcfcfc" stroke="#5a5d68" stroke-width="0.65"/>
<rect x="370.6" y="54.2" width="2.2" height="2" fill="#e4e4ea" stroke="#5a5d68" stroke-width="0.4"/>
<rect x="381.0" y="51.8" width="5.2" height="4.4" fill="#fcfcfc" stroke="#5a5d68" stroke-width="0.65"/><rect x="384.0" y="54.2" width="5.2" height="4.4" fill="#e6e6ea" stroke="#5a5d68" stroke-width="0.65"/>
<rect x="391.3" y="46.4" width="14.8" height="17.4" fill="#f6f9fb" stroke="#4394bd" stroke-width="1.7"/>
<rect x="394.8" y="51.8" width="5.2" height="4.4" fill="#fcfcfc" stroke="#6a6f80" stroke-width="0.65"/><rect x="397.8" y="54.2" width="5.2" height="4.4" fill="#fcfcfc" stroke="#6a6f80" stroke-width="0.65"/>
<rect x="408.4" y="51.6" width="5" height="4.6" fill="#f4f4f8" stroke="#24305a" stroke-width="0.8"/><rect x="410.8" y="54" width="5" height="4.8" fill="#2a3358"/>
<rect x="420.4" y="47.6" width="0.8" height="14.4" fill="#cfcfcf"/>
<path d="M426.6 53h7.4M432.4 53v5.4h-4.6v-3.2h4.6" stroke="#a7abb8" stroke-width="0.8" fill="none"/>
<rect x="54" y="75" width="53" height="35.6" rx="2" fill="#000" opacity="0.4" style="filter:blur(1.6px)"/>
<rect x="51.6" y="72.2" width="52" height="36.6" rx="1.2" fill="#dfe9f5" stroke="#5d6b7c" stroke-width="0.9"/>
<rect x="55.2" y="87.2" width="44.6" height="17.8" fill="#f2f2f2" stroke="#6b7787" stroke-width="0.9"/>
<text x="56.6" y="84.4" font-size="9.4" fill="#1c2430" stroke="#1c2430" stroke-width="0.15" textLength="31" lengthAdjust="spacingAndGlyphs">Laser T...</text>
<rect x="89.2" y="75.8" width="10" height="10.2" rx="1" fill="#c9574a" stroke="#a8483c" stroke-width="0.6"/>
<path d="M92.6 79.2l3.4 3.4m0-3.4l-3.4 3.4" stroke="#fff" stroke-width="1.4"/>
<path d="M61 92v7.6M61 92.4h4.6" stroke="#a9c6d8" stroke-width="0.9" fill="none"/><circle cx="66" cy="98.6" r="1.5" fill="none" stroke="#9bbad0" stroke-width="0.8"/><path d="M62 93.4l2.4 3" stroke="#c3d8e4" stroke-width="0.6"/>
<path d="M74.4 92v7.6M74.4 92.4h7M75 94.6l6.4 3" stroke="#a9c6d8" stroke-width="0.9" fill="none"/>
<path d="M88.6 93l5 5.4M87.4 96.4l7.6-0.6M91 96.6l-1.6 3" stroke="#6f8ea6" stroke-width="1" fill="none"/>
</svg></body></html>
